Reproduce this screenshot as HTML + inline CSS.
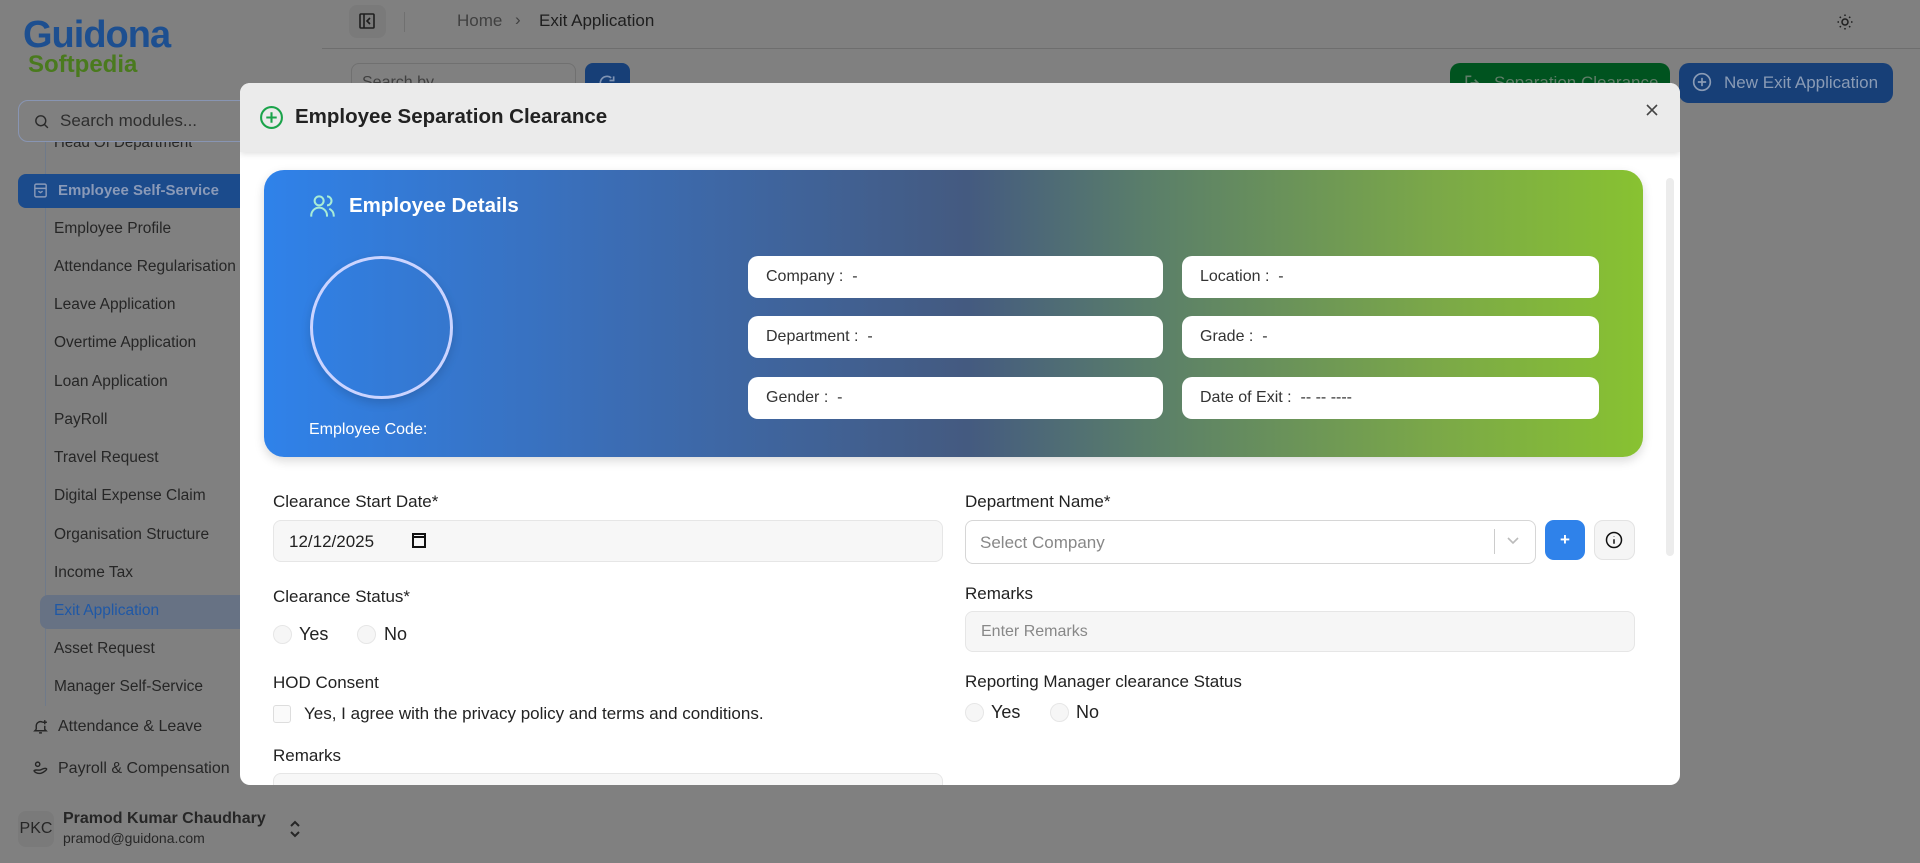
<!DOCTYPE html>
<html><head><meta charset="utf-8"><style>
*{box-sizing:border-box;margin:0;padding:0}
body{width:1920px;height:863px;overflow:hidden;background:#808080;font-family:"Liberation Sans",sans-serif;position:relative;color:#222}
.a{position:absolute;white-space:nowrap}
.si{position:absolute;left:54px;font-size:15.5px;color:#262626}
.fld{position:absolute;background:#fff;border-radius:10px;height:42px;font-size:16px;color:#333;padding-left:18px;line-height:42px}
.lbl{position:absolute;font-size:17px;color:#222;white-space:nowrap}
.rad{position:absolute;width:19px;height:19px;border-radius:50%;background:#f6f6f6;border:1px solid #e6e6e6}
.rt{position:absolute;font-size:18px;color:#222}
</style></head><body>
<!-- sidebar -->
<div class="a" style="left:23px;top:14px;font-size:38px;font-weight:bold;color:#1d4f90;letter-spacing:-1px">Guidona</div>
<div class="a" style="left:28px;top:51px;font-size:24px;font-weight:bold;color:#4a7a1e">Softpedia</div>
<div class="a" style="left:18px;top:100px;width:260px;height:42px;border:1px solid #8895b3;border-radius:10px"></div>
<svg class="a" style="left:33px;top:113px" width="17" height="17" viewBox="0 0 24 24" fill="none" stroke="#2a2a2a" stroke-width="2"><circle cx="11" cy="11" r="7"/><path d="M21 21l-5-5"/></svg>
<div class="a" style="left:60px;top:111px;font-size:17px;color:#2e2e2e">Search modules...</div>
<div class="a" style="left:54px;top:142px;font-size:15px;color:#262626;height:9px;overflow:hidden;line-height:2px">Head Of Department</div>
<div class="a" style="left:45px;top:142px;width:1px;height:32px;background:#6f7a8a"></div>
<div class="a" style="left:18px;top:174px;width:230px;height:34px;background:#1b4b8c;border-radius:8px"></div>
<svg class="a" style="left:32px;top:182px" width="17" height="17" viewBox="0 0 24 24" fill="none" stroke="#8a9ab8" stroke-width="2"><rect x="4" y="3" width="16" height="18" rx="2"/><path d="M4 9h16M9 13l3 2 3-2"/></svg>
<div class="a" style="left:58px;top:182px;font-size:15px;font-weight:bold;color:#8a9ab8">Employee Self-Service</div>
<div class="a" style="left:45px;top:208px;width:1px;height:498px;background:#6f7a8a"></div>
<div class="a" style="left:40px;top:595px;width:210px;height:34px;background:#677284;border-radius:8px"></div>
<div class="si" style="top:220px">Employee Profile</div>
<div class="si" style="top:258px">Attendance Regularisation</div>
<div class="si" style="top:296px">Leave Application</div>
<div class="si" style="top:334px">Overtime Application</div>
<div class="si" style="top:373px">Loan Application</div>
<div class="si" style="top:411px">PayRoll</div>
<div class="si" style="top:449px">Travel Request</div>
<div class="si" style="top:487px">Digital Expense Claim</div>
<div class="si" style="top:526px">Organisation Structure</div>
<div class="si" style="top:564px">Income Tax</div>
<div class="si" style="top:602px;color:#1f58a6">Exit Application</div>
<div class="si" style="top:640px">Asset Request</div>
<div class="si" style="top:678px">Manager Self-Service</div>
<svg class="a" style="left:32px;top:718px" width="17" height="17" viewBox="0 0 24 24" fill="none" stroke="#262626" stroke-width="2"><path d="M6 16V11a6 6 0 0 1 9-5M18 11v5l2 2H4l2-2M10 21h4M18 3v6M15 6h6"/></svg>
<div class="si" style="top:718px;left:58px;font-size:16px">Attendance &amp; Leave</div>
<svg class="a" style="left:32px;top:760px" width="17" height="17" viewBox="0 0 24 24" fill="none" stroke="#262626" stroke-width="2"><circle cx="8" cy="6" r="3"/><path d="M3 15c3-2 6 0 9-1s5-3 8-2-5 7-9 7-8-2-8-4z"/></svg>
<div class="si" style="top:760px;left:58px;font-size:16px">Payroll &amp; Compensation</div>
<div class="a" style="left:18px;top:811px;width:36px;height:36px;border-radius:8px;background:#7a7a7a;font-size:16px;line-height:36px;text-align:center;color:#262626">PKC</div>
<div class="a" style="left:63px;top:810px;font-size:16px;font-weight:bold;color:#262626">Pramod Kumar Chaudhary</div>
<div class="a" style="left:63px;top:830px;font-size:14px;color:#262626">pramod@guidona.com</div>
<svg class="a" style="left:288px;top:820px" width="14" height="18" viewBox="0 0 14 18" fill="none" stroke="#262626" stroke-width="2"><path d="M3 6l4-4 4 4M3 12l4 4 4-4"/></svg>
<!-- top bar -->
<div class="a" style="left:349px;top:5px;width:37px;height:33px;border-radius:8px;background:#7a7a7a"></div>
<svg class="a" style="left:359px;top:13px" width="16" height="16" viewBox="0 0 16 16" fill="none" stroke="#1f1f1f" stroke-width="1.6"><rect x="1" y="1" width="14" height="14" rx="1"/><path d="M5 1v14M11 5l-3 3 3 3"/></svg>
<div class="a" style="left:404px;top:12px;width:1px;height:20px;background:#707070"></div>
<div class="a" style="left:457px;top:11px;font-size:17px;color:#404040">Home</div>
<div class="a" style="left:515px;top:10px;font-size:17px;color:#404040">›</div>
<div class="a" style="left:539px;top:11px;font-size:17px;color:#1e1e1e">Exit Application</div>
<div class="a" style="left:322px;top:48px;width:1598px;height:1px;background:#6e6e6e"></div>
<svg class="a" style="left:1836px;top:13px" width="18" height="18" viewBox="0 0 24 24" fill="none" stroke="#1e1e1e" stroke-width="2"><circle cx="12" cy="12" r="4"/><path d="M12 2v2M12 20v2M2 12h2M20 12h2M5 5l1.5 1.5M17.5 17.5L19 19M5 19l1.5-1.5M17.5 6.5L19 5"/></svg>
<div class="a" style="left:351px;top:63px;width:225px;height:40px;border:1px solid #707070;border-radius:8px;padding:10px 10px;font-size:16px;color:#404040">Search by</div>
<div class="a" style="left:585px;top:63px;width:45px;height:40px;border-radius:8px;background:#173f77"></div>
<svg class="a" style="left:597px;top:73px" width="20" height="20" viewBox="0 0 24 24" fill="none" stroke="#7f93b3" stroke-width="2"><path d="M20 12a8 8 0 1 1-3-6.2M20 4v5h-5"/></svg>
<div class="a" style="left:1450px;top:63px;width:220px;height:40px;border-radius:10px;background:#00531f;color:#607d68;font-size:17px;padding:10px 0 0 44px">Separation Clearance</div>
<svg class="a" style="left:1463px;top:73px" width="20" height="20" viewBox="0 0 24 24" fill="none" stroke="#607d68" stroke-width="2"><path d="M10 4H4v16h6M14 8l4 4-4 4M18 12H9"/></svg>
<div class="a" style="left:1679px;top:63px;width:214px;height:40px;border-radius:10px;background:#173f77;color:#8a9bb5;font-size:17px;padding:10px 0 0 45px">New Exit Application</div>
<svg class="a" style="left:1692px;top:72px" width="20" height="20" viewBox="0 0 24 24" fill="none" stroke="#8a9bb5" stroke-width="2"><circle cx="12" cy="12" r="10"/><path d="M12 7v10M7 12h10"/></svg>
<!-- modal -->
<div class="a" style="left:240px;top:83px;width:1440px;height:702px;background:#fff;border-radius:10px;overflow:hidden">
 <div class="a" style="left:0;top:0;width:1440px;height:69px;background:#ebebeb;box-shadow:0 2px 6px rgba(0,0,0,.12)"></div>
 <svg class="a" style="left:19px;top:22px" width="25" height="25" viewBox="0 0 24 24" fill="none" stroke="#1aa34a" stroke-width="2"><circle cx="12" cy="12" r="10"/><path d="M12 7v10M7 12h10"/></svg>
 <div class="a" style="left:55px;top:22px;font-size:20.5px;font-weight:bold;color:#222">Employee Separation Clearance</div>
 <svg class="a" style="left:1405px;top:20px" width="14" height="14" viewBox="0 0 14 14" stroke="#444" stroke-width="1.6"><path d="M2 2l10 10M12 2L2 12"/></svg>
 <div class="a" style="left:1426px;top:95px;width:8px;height:378px;background:#ececec;border-radius:4px"></div>
 <!-- banner -->
 <div class="a" style="left:24px;top:87px;width:1379px;height:287px;border-radius:20px;background:linear-gradient(90deg,#2f82ea 0%,#3b6db5 25%,#445a80 51%,#5a7e6a 64%,#7ba848 85%,#88c231 100%);box-shadow:0 4px 10px rgba(0,0,0,.15)"></div>
 <svg class="a" style="left:69px;top:110px" width="27" height="27" viewBox="0 0 24 24" fill="none" stroke="#a8ecd6" stroke-width="1.8"><circle cx="9" cy="7" r="4"/><path d="M2 21v-1a7 7 0 0 1 14 0v1M16 3a4 4 0 0 1 0 8M22 21v-1a7 7 0 0 0-4-6"/></svg>
 <div class="a" style="left:109px;top:111px;font-size:20.5px;font-weight:bold;color:#fff">Employee Details</div>
 <div class="a" style="left:70px;top:173px;width:143px;height:143px;border-radius:50%;border:3px solid #cbd4ff;box-shadow:0 4px 10px rgba(0,0,0,.15)"></div>
 <div class="a" style="left:69px;top:338px;font-size:16px;color:#fff">Employee Code:</div>
 <div class="fld" style="left:508px;top:173px;width:415px">Company :&nbsp; -</div>
 <div class="fld" style="left:942px;top:173px;width:417px">Location :&nbsp; -</div>
 <div class="fld" style="left:508px;top:233px;width:415px">Department :&nbsp; -</div>
 <div class="fld" style="left:942px;top:233px;width:417px">Grade :&nbsp; -</div>
 <div class="fld" style="left:508px;top:294px;width:415px">Gender :&nbsp; -</div>
 <div class="fld" style="left:942px;top:294px;width:417px">Date of Exit :&nbsp; -- -- ----</div>
 <!-- left form -->
 <div class="lbl" style="left:33px;top:409px">Clearance Start Date*</div>
 <div class="a" style="left:33px;top:437px;width:670px;height:42px;background:#f7f7f7;border:1px solid #e6e6e6;border-radius:8px;font-size:17px;padding:11px 0 0 15px">12/12/2025</div>
 <svg class="a" style="left:172px;top:449px" width="14" height="16" viewBox="0 0 14 16" fill="none" stroke="#111" stroke-width="2"><rect x="1" y="2" width="12" height="13"/><path d="M1 5h12"/></svg>
 <div class="lbl" style="left:33px;top:504px">Clearance Status*</div>
 <div class="rad" style="left:33px;top:542px"></div><div class="rt" style="left:59px;top:541px">Yes</div>
 <div class="rad" style="left:117px;top:542px"></div><div class="rt" style="left:144px;top:541px">No</div>
 <div class="lbl" style="left:33px;top:590px">HOD Consent</div>
 <div class="a" style="left:33px;top:622px;width:18px;height:18px;border:1px solid #ddd;border-radius:3px;background:#fafafa"></div>
 <div class="a" style="left:64px;top:621px;font-size:17px;color:#222">Yes, I agree with the privacy policy and terms and conditions.</div>
 <div class="lbl" style="left:33px;top:663px">Remarks</div>
 <div class="a" style="left:33px;top:690px;width:670px;height:42px;background:#f7f7f7;border:1px solid #e6e6e6;border-radius:8px"></div>
 <!-- right form -->
 <div class="lbl" style="left:725px;top:409px">Department Name*</div>
 <div class="a" style="left:725px;top:437px;width:571px;height:44px;background:#fff;border:1px solid #d6d6d6;border-radius:8px;font-size:17px;color:#888;padding:12px 0 0 14px">Select Company</div>
 <div class="a" style="left:1254px;top:446px;width:1px;height:25px;background:#ccc"></div>
 <svg class="a" style="left:1266px;top:453px" width="14" height="10" viewBox="0 0 14 10" fill="none" stroke="#bbb" stroke-width="1.6"><path d="M2 2l5 5 5-5"/></svg>
 <div class="a" style="left:1305px;top:437px;width:40px;height:40px;background:#2f82ea;border-radius:9px;color:#fff;font-size:17px;font-weight:bold;text-align:center;line-height:40px">+</div>
 <div class="a" style="left:1354px;top:437px;width:41px;height:40px;background:#f5f5f5;border:1px solid #e3e3e3;border-radius:9px"></div>
 <svg class="a" style="left:1365px;top:448px" width="18" height="18" viewBox="0 0 24 24" fill="none" stroke="#111" stroke-width="2"><circle cx="12" cy="12" r="10"/><path d="M12 11v6M12 7v.5"/></svg>
 <div class="lbl" style="left:725px;top:501px">Remarks</div>
 <div class="a" style="left:725px;top:528px;width:670px;height:41px;background:#f6f6f6;border:1px solid #e6e6e6;border-radius:8px;font-size:16px;color:#888;padding:11px 0 0 15px">Enter Remarks</div>
 <div class="lbl" style="left:725px;top:589px">Reporting Manager clearance Status</div>
 <div class="rad" style="left:725px;top:620px"></div><div class="rt" style="left:751px;top:619px">Yes</div>
 <div class="rad" style="left:810px;top:620px"></div><div class="rt" style="left:836px;top:619px">No</div>
</div>
</body></html>
